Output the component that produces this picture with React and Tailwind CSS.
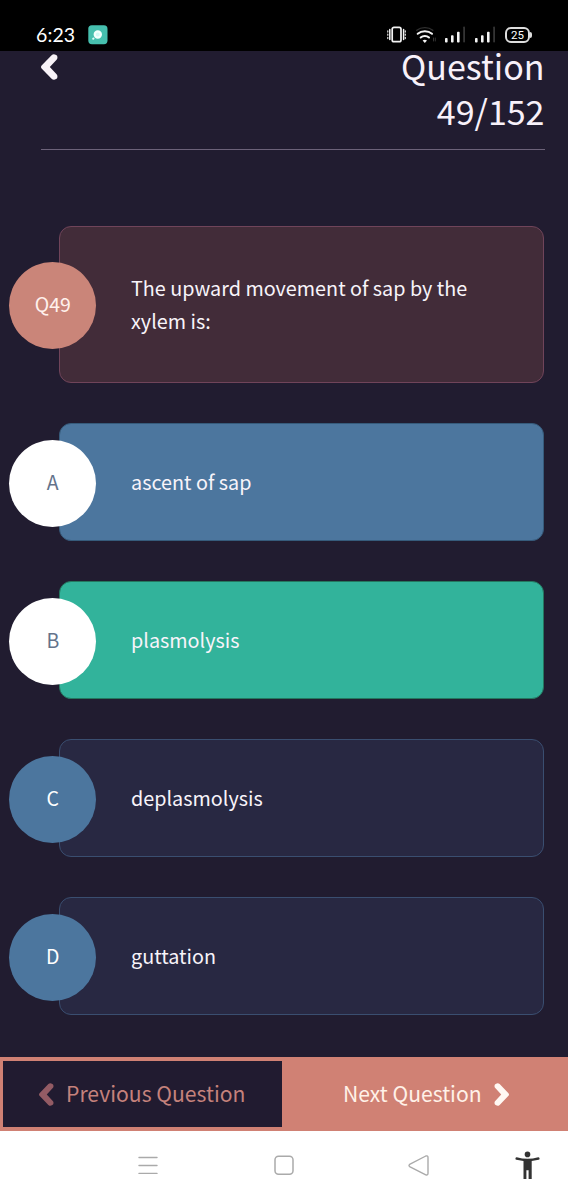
import React from "react";

const stroke = { fill: "none", strokeLinecap: "round", strokeLinejoin: "round" };

function Chevron({ className, flip, width = 17, height = 26 }) {
  return (
    <svg className={className} width={width} height={height} viewBox="0 0 17 26" fill="currentColor">
      <path
        transform={flip ? "matrix(-1 0 0 1 17 0)" : undefined}
        d="M.6 11.5 10.6 1.2Q12.2 -.2 13.8 .4L15.2 1Q16.5 1.8 16.4 3.2 16.6 4.6 15.6 5.7L8.8 13l6.8 7.3q1 1.1.8 2.5.1 1.4-1.2 2.2l-1.4.6q-1.6.6-3.2-.8L.6 14.5q-1.2-1.5 0-3Z"
      />
    </svg>
  );
}

function Signal() {
  return (
    <svg width="21" height="18" viewBox="0 0 21 18" fill="#f4f4f4">
      <rect x="0" y="13" width="2.6" height="4.5" rx="0.8" />
      <rect x="6" y="10.2" width="2.6" height="7.3" rx="0.8" />
      <rect x="12" y="6.8" width="2.6" height="10.7" rx="0.8" />
      <rect x="18.2" y="1.5" width="1.8" height="16" rx="0.8" fill="#343434" />
    </svg>
  );
}

function StatusBar() {
  return (
    <div className="flex h-[51px] items-start bg-black pt-[25px] text-white">
      <span className="ml-[36px] w-[52px] font-['Lato','Noto_Sans',sans-serif] text-[19.5px] leading-[20px] tracking-[0.1px]">6:23</span>
      <svg width="20" height="20" viewBox="0 0 20 20">
        <rect x="0.3" y="0.2" width="19.2" height="19" rx="3.6" fill="#46bfae" />
        <circle cx="9.8" cy="9.5" r="3.1" fill="#d0faf5" stroke="#f3fffd" strokeWidth="2.2" />
        <path d="M5.2 13.8l.3-.3" stroke="#d8fffa" strokeWidth="2" strokeLinecap="round" />
      </svg>
      <svg className="ml-[279px]" width="19" height="19" viewBox="0 0 19 19" {...stroke} stroke="#f4f4f4" strokeWidth="1.7">
        <rect x="5.2" y="2.3" width="8.8" height="14.4" rx="1.8" />
        <path d="M2.8 4.6v9.8M16.6 4.6v9.8" strokeWidth="1.5" />
        <path d="M.8 5.7v1.4M.8 9v1.2M.8 12.2v1.4M18.3 5.7v1.4M18.3 9v1.2M18.3 12.2v1.4" strokeWidth="1.1" />
      </svg>
      <svg className="mt-px ml-[9px]" width="22" height="19" viewBox="0 0 22 19" {...stroke} stroke="#f4f4f4" strokeWidth="2">
        <path d="M1.8 4.2C6.2.8 13.5.8 17.8 4.2" stroke="#303030" strokeWidth="1.4" />
        <path d="M2.7 7.8C6.7 4.5 13 4.5 17 7.8M5.7 11.5c2.3-2.1 6-2.1 8.3 0" />
        <path d="M7.6 14.5q2.2-1.7 4.4 0l-2.2 2.4z" fill="#f4f4f4" stroke="none" />
        <path d="M18.5 12v3M20.3 12v3" stroke="#353535" strokeWidth="1" />
      </svg>
      <span className="ml-[8px]"><Signal /></span>
      <span className="ml-[9px]"><Signal /></span>
      <div className="mt-[2px] ml-[9px] flex h-[16px] w-[25px] items-center justify-center rounded-[6px] border-2 border-[#dddddd] font-['Roboto',sans-serif] text-[11.5px] leading-[12px]">25</div>
      <div className="mt-[7px] h-[6px] w-[2px] rounded-r bg-[#dddddd]" />
    </div>
  );
}

function Row({ badge, badgeClass, cardClass, children }) {
  return (
    <div className="flex items-center pl-[9.3px]">
      <div className={`mt-[2px] z-10 flex h-[87px] w-[87px] shrink-0 items-center justify-center rounded-full pb-[3px] text-[19.5px] ${badgeClass}`}>{badge}</div>
      <div className={`-ml-[37.8px] flex w-[485.5px] items-center rounded-[12px] border pl-[71.5px] text-[19.8px] leading-[33px] text-[#f8f4fa] ${cardClass}`}>
        <div className="pb-[2px] whitespace-nowrap">{children}</div>
      </div>
    </div>
  );
}

export default function App() {
  return (
    <div className="flex h-[1200px] w-[568px] flex-col overflow-hidden bg-[#211c30] font-['Noto_Sans_CJK_SC','Noto_Sans',sans-serif]">
      <StatusBar />
      <header className="ml-[41px] flex h-[99px] w-[503.5px] justify-between border-b border-[#6c6279]">
        <Chevron className="mt-[3px] text-[#f8f3f8]" />
        <h1 className="-mt-[8px] text-right text-[34px] leading-[45px] font-normal text-[#f8f1fa]">Question<br />49/152</h1>
      </header>
      <main className="mt-[76px] flex h-[831px] flex-col gap-[40px]">
        <Row badge="Q49" badgeClass="bg-[#ca8579] text-[#fff1ec]" cardClass="h-[157px] border-[#70445a] bg-[#422c39]">
          The upward movement of sap by the<br />xylem is:
        </Row>
        <Row badge="A" badgeClass="bg-white text-[#64738b]" cardClass="h-[118px] border-[#365b7b] bg-[#4c769e]">ascent of sap</Row>
        <Row badge="B" badgeClass="bg-white text-[#64738b]" cardClass="h-[118px] border-[#24775f] bg-[#32b39b]">plasmolysis</Row>
        <Row badge="C" badgeClass="bg-[#4c769e] text-white" cardClass="h-[118px] border-[#3a4e70] bg-[#282842]">deplasmolysis</Row>
        <Row badge="D" badgeClass="bg-[#4c769e] text-white" cardClass="h-[118px] border-[#3a4e70] bg-[#282842]">guttation</Row>
      </main>
      <div className="flex h-[74px] shrink-0 bg-[#d08174] text-[21.15px] leading-[32px]">
        <div className="mt-[4px] mb-[4px] ml-[3px] flex w-[279px] items-center bg-[#211b30] pl-[36px] text-[#c5827c]">
          <Chevron className="text-[#935b64]" width={15} height={23} />
          <span className="ml-[12px] pb-[3px] whitespace-nowrap">Previous Question</span>
        </div>
        <div className="flex items-center pl-[61px] text-[#fff1e8]">
          <span className="pb-[3px] whitespace-nowrap">Next Question</span>
          <Chevron flip className="ml-[12px] text-[#fff8f3]" width={15} height={23} />
        </div>
      </div>
      <nav className="flex h-[69px] shrink-0 items-start bg-white pt-[20px]">
        <svg className="ml-[138px]" width="20" height="30" viewBox="0 0 20 30" {...stroke} stroke="#aaa" strokeWidth="1.4">
          <path d="M1 6.5h18M1 14.5h18M1 22.4h18" />
        </svg>
        <svg className="ml-[116px]" width="20" height="30" viewBox="0 0 20 30" {...stroke} stroke="#aaa" strokeWidth="1.5">
          <rect x="1" y="5.2" width="18" height="18" rx="3.5" />
        </svg>
        <svg className="ml-[114px]" width="22" height="30" viewBox="0 0 22 30" {...stroke} stroke="#aaa" strokeWidth="1.4">
          <path d="M1.6 13.4 17.8 5Q20 4.3 20 6.6V22.2Q20 24.5 17.8 23.8L1.6 15.6Q.4 14.5 1.6 13.4Z" />
        </svg>
        <svg className="ml-[85px]" width="26" height="30" viewBox="0 0 26 30" fill="#333">
          <circle cx="12.5" cy="3.4" r="2.8" />
          <path d="M1.8 6.2Q12.5 9.2 23.2 6.2q1.2 0 1.4 1.2 0 1.1-1 1.4l-6.9 1.2V28h-3.1v-8.8h-2.2V28H8.5V10L1.4 8.8Q.4 8.5.4 7.4.6 6.2 1.8 6.2Z" />
        </svg>
      </nav>
    </div>
  );
}
